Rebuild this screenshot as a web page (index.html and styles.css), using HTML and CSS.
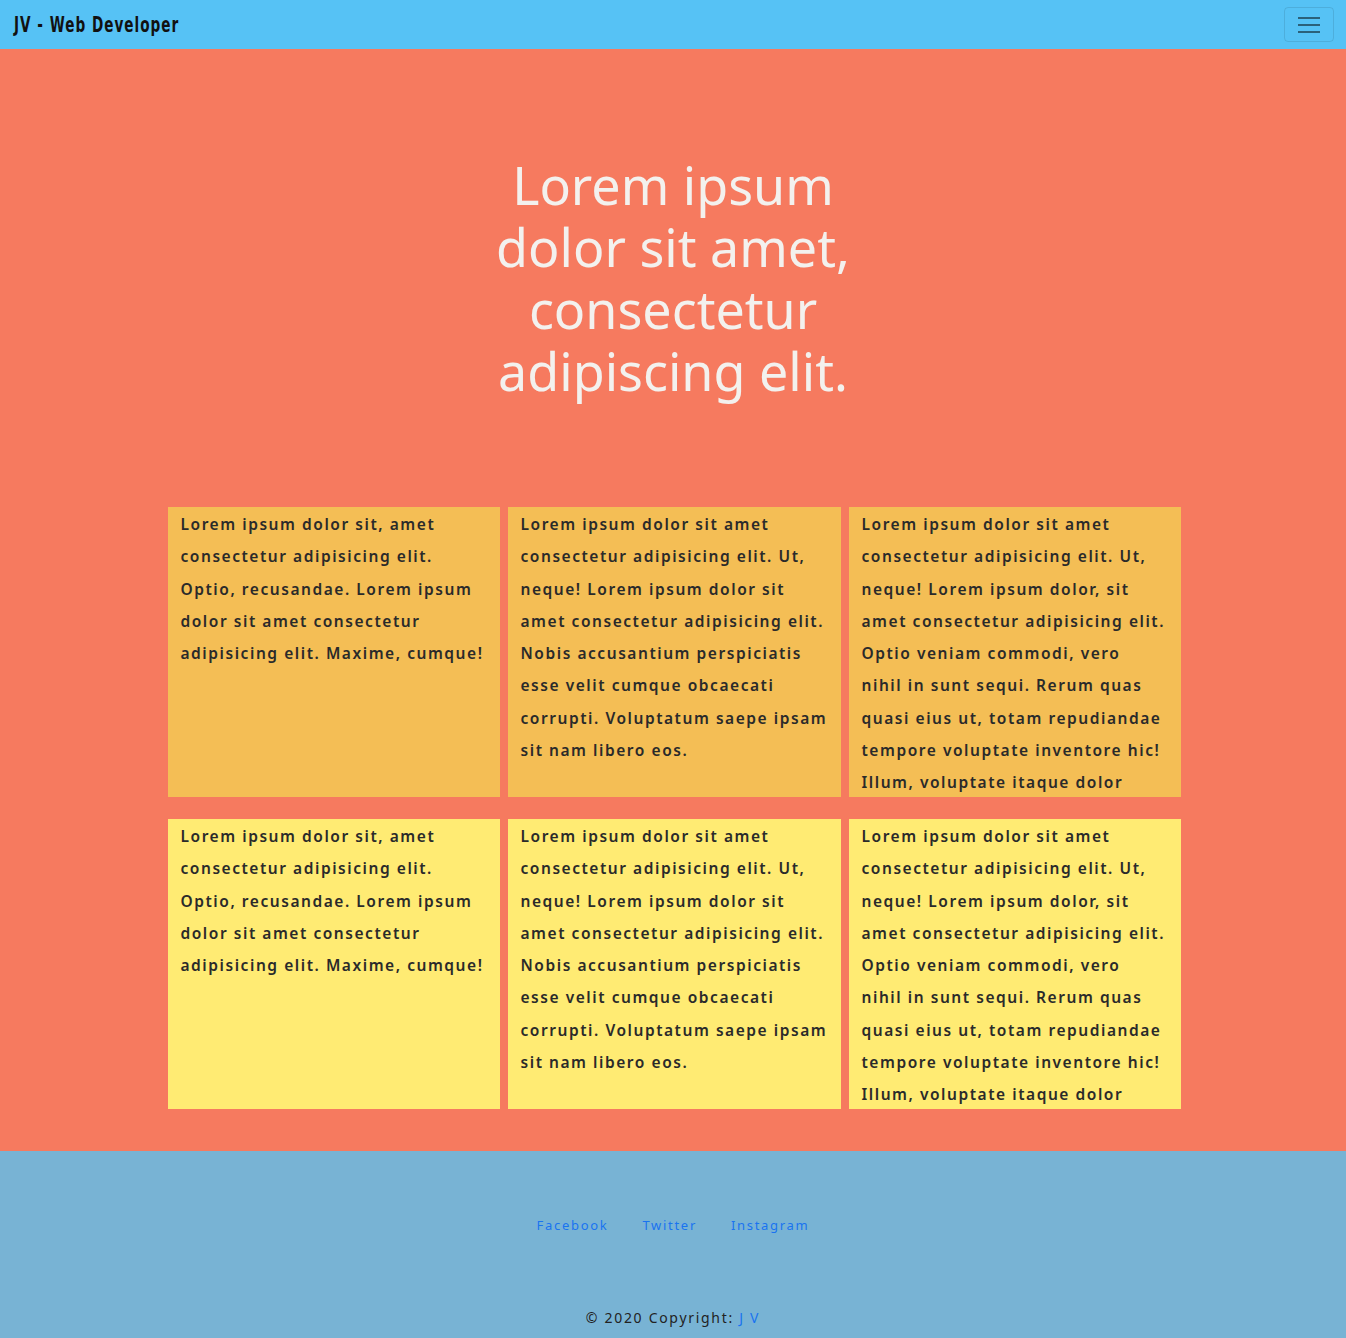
FILE: index.html
```html
<!DOCTYPE html>
<html lang="en">
<head>
<meta charset="utf-8">
<title>JV - Web Developer</title>
<link rel="stylesheet" href="styles.css">
</head>
<body>
<nav class="navbar">
  <a class="brand" href="#">JV - Web Developer</a>
  <button class="toggler" aria-label="Menu">
    <span class="bar"></span><span class="bar"></span><span class="bar"></span>
  </button>
</nav>
<main class="main">
  <h1 class="hero">Lorem ipsum dolor sit amet, consectetur adipiscing elit.</h1>
  <section class="grid">
    <div class="card orange"><p>Lorem ipsum dolor sit, amet consectetur adipisicing elit. Optio, recusandae. Lorem ipsum dolor sit amet consectetur adipisicing elit. Maxime, cumque!</p></div>
    <div class="card orange mid"><p>Lorem ipsum dolor sit amet consectetur adipisicing elit. Ut, neque! Lorem ipsum dolor sit amet consectetur adipisicing elit. Nobis accusantium perspiciatis esse velit cumque obcaecati corrupti. Voluptatum saepe ipsam sit nam libero eos.</p></div>
    <div class="card orange"><p>Lorem ipsum dolor sit amet consectetur adipisicing elit. Ut, neque! Lorem ipsum dolor, sit amet consectetur adipisicing elit. Optio veniam commodi, vero nihil in sunt sequi. Rerum quas quasi eius ut, totam repudiandae tempore voluptate inventore hic! Illum, voluptate itaque dolor</p></div>
    <div class="card yellow"><p>Lorem ipsum dolor sit, amet consectetur adipisicing elit. Optio, recusandae. Lorem ipsum dolor sit amet consectetur adipisicing elit. Maxime, cumque!</p></div>
    <div class="card yellow mid"><p>Lorem ipsum dolor sit amet consectetur adipisicing elit. Ut, neque! Lorem ipsum dolor sit amet consectetur adipisicing elit. Nobis accusantium perspiciatis esse velit cumque obcaecati corrupti. Voluptatum saepe ipsam sit nam libero eos.</p></div>
    <div class="card yellow"><p>Lorem ipsum dolor sit amet consectetur adipisicing elit. Ut, neque! Lorem ipsum dolor, sit amet consectetur adipisicing elit. Optio veniam commodi, vero nihil in sunt sequi. Rerum quas quasi eius ut, totam repudiandae tempore voluptate inventore hic! Illum, voluptate itaque dolor</p></div>
  </section>
</main>
<footer class="footer">
  <ul class="links">
    <li><a href="#">Facebook</a></li>
    <li><a href="#">Twitter</a></li>
    <li><a href="#">Instagram</a></li>
  </ul>
  <p class="copy">© 2020 Copyright: <a href="#">J V</a></p>
</footer>
</body>
</html>
```
FILE: styles.css
```css
* { box-sizing: border-box; }
body {
  margin: 0;
  font-family: "Noto Sans", "Open Sans", sans-serif;
}
.navbar {
  height: 49px;
  background: #56c2f5;
  display: flex;
  align-items: center;
  justify-content: space-between;
  padding: 0 12px 0 14px;
}
.brand {
  font-family: "DejaVu Sans Condensed", "DejaVu Sans", sans-serif;
  font-weight: bold;
  font-size: 21px;
  letter-spacing: 1.4px;
  color: #111;
  text-decoration: none;
  display: inline-block;
  transform: scaleX(0.72);
  transform-origin: left center;
}
.toggler {
  width: 50px;
  height: 35px;
  border: 1px solid rgba(0,0,0,0.1);
  border-radius: 4px;
  background: transparent;
  display: flex;
  flex-direction: column;
  align-items: center;
  justify-content: center;
  gap: 5px;
  padding: 0;
}
.bar {
  display: block;
  width: 22px;
  height: 2px;
  background: rgba(0,0,0,0.5);
}
.main {
  background: #f67a5f;
  padding: 105px 0 42px;
}
.hero {
  margin: 0 auto 105px;
  max-width: 400px;
  text-align: center;
  color: #f3f1ee;
  font-weight: 400;
  font-size: 52px;
  line-height: 62px;
}
.grid {
  width: 1013px;
  margin: 0 auto;
  display: grid;
  grid-template-columns: 332px 333px 332px;
  column-gap: 8px;
  row-gap: 22px;
  position: relative;
  left: 1px;
}
.card {
  height: 290px;
  overflow: hidden;
  padding: 1px 15.4px 0 13px;
}
.card.mid {
  padding-right: 13px;
}
.card p {
  margin: 0;
  font-size: 15.5px;
  font-weight: 600;
  line-height: 32.3px;
  letter-spacing: 1.55px;
  color: #2a2a2a;
}
.orange { background: #f4be55; }
.yellow { background: #ffeb73; }
.footer {
  background: #78b3d4;
  height: 187px;
  padding-top: 62px;
  text-align: center;
}
.links {
  list-style: none;
  margin: 0;
  padding: 0;
  display: flex;
  justify-content: center;
  gap: 34px;
}
.links a, .copy a {
  color: #1a73f0;
  text-decoration: none;
}
.links a {
  font-size: 13px;
  letter-spacing: 1.7px;
}
.copy {
  margin: 73px 0 0;
  font-size: 14px;
  letter-spacing: 1.7px;
  color: #222;
}
```
